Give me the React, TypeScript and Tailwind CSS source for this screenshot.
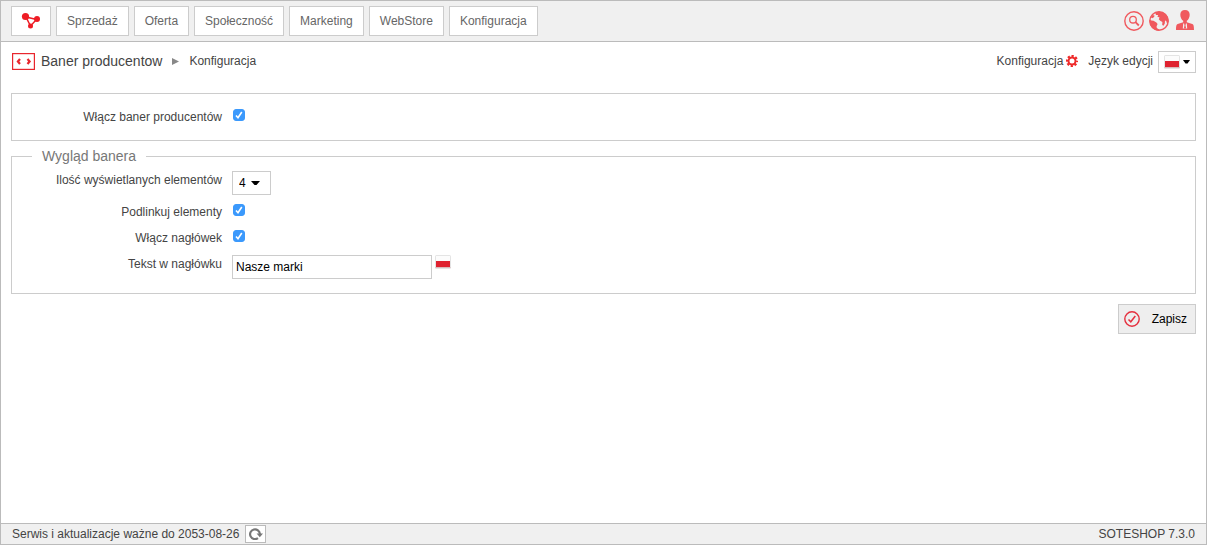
import { useState } from "react";
import type { ReactNode } from "react";

const navItems = [
  "Sprzedaż",
  "Oferta",
  "Społeczność",
  "Marketing",
  "WebStore",
  "Konfiguracja",
];

const LogoIcon = () => (
  <svg width="20" height="18" viewBox="0 0 20 18" fill="#ee1c25">
    <path d="M5 5 15.500 7.500 9.500 14Z" fill="none" stroke="#ee1c25" strokeWidth="1.500" />
    <circle cx="4.500" cy="4.500" r="3.600" />
    <circle cx="16" cy="7" r="3" />
    <circle cx="9.500" cy="14" r="2.500" />
  </svg>
);

const SearchIcon = () => (
  <svg width="20" height="20" viewBox="0 0 20 20" fill="none" stroke="#f0595e">
    <circle cx="10" cy="10" r="9.200" strokeWidth="1.400" />
    <circle cx="9" cy="8.700" r="3.300" strokeWidth="1.300" />
    <path d="M11.500 11.200 14.800 14.500" strokeWidth="1.800" />
  </svg>
);

const GlobeIcon = () => (
  <svg width="20" height="20" viewBox="0 0 20 20">
    <circle cx="10" cy="10" r="9.200" fill="#f0f0f0" stroke="#f0595e" strokeWidth="1.400" />
    <g fill="#f0595e">
      <path d="M6 1.600C9 0.200 13.500 0.300 16.500 3 18.500 5 19.800 7.500 19.600 11L18 12.500 17.200 10 16 9.500 15.800 12.500 14.600 14.800 13.200 14 13.400 11 11.200 9.800 9.800 8.200 10.600 6.500 8.400 5.800 9.200 4 7 4Z" />
      <path d="M0.500 8.800 2.500 9.600 4.500 9.800 7.400 11.600 8.600 13 7.600 15.200 7.800 17 10.500 18.800 9.500 19.700C4 19.500 0.300 15 0.500 8.800Z" />
      <path d="M3.200 4.300 5.400 4.200 5.200 6 3.200 7.200 2 6.500Z" />
    </g>
  </svg>
);

const UserIcon = () => (
  <svg width="18" height="20" viewBox="0 0 18 20" fill="#f0595e">
    <path d="M9 0C12 0 13.700 1.900 13.700 4.700 13.700 7.400 12.200 10 10.800 10.800L10.800 12.300 16.300 14C17.500 14.500 18 15.800 18 20H0C0 15.800.5 14.500 1.700 14L7.200 12.300V10.800C5.800 10 4.300 7.400 4.300 4.700 4.300 1.900 6 0 9 0Z" />
    <path d="M7.200 13.300 9 14.300 10.800 13.300 11.200 18.500H6.800Z" fill="#f0f0f0" />
    <path d="M8.200 14H9.800L9.500 15.200 10.100 18.500H7.900L8.500 15.200Z" />
  </svg>
);

const CodeIcon = () => (
  <svg width="23" height="17" viewBox="0 0 23 17" fill="none" stroke="#e8262d">
    <rect x="0.600" y="0.600" width="21.800" height="15.800" strokeWidth="1.200" />
    <path d="M8 6 5.900 8.500 8 11M15.500 6 17.600 8.500 15.500 11" strokeWidth="2.200" />
  </svg>
);

const GearIcon = () => (
  <svg width="12" height="12" viewBox="0 0 12 12" fill="none" stroke="#ee2a2a">
    <circle cx="6" cy="6" r="3.500" strokeWidth="2" />
    <circle cx="6" cy="6" r="5" strokeWidth="2.200" strokeDasharray="2.200 1.727" strokeDashoffset="1.100" />
  </svg>
);

const Flag = () => (
  <svg width="16" height="14" viewBox="0 0 16 14">
    <rect x="0" y="0" width="16" height="14" rx="1.500" fill="#e4e4e4" />
    <rect x="1" y="1" width="14" height="5" fill="#fcfcfc" />
    <rect x="1" y="6" width="14" height="6" fill="#df2230" />
    <rect x="0.500" y="12" width="15" height="1" fill="#d9b9bb" />
  </svg>
);

const Caret = () => (
  <svg width="9" height="4" viewBox="0 0 9 4" className="pointer-events-none">
    <path d="M0 0H9L5.500 4H3.500Z" fill="#000" />
  </svg>
);

const SaveIcon = () => (
  <svg width="16" height="16" viewBox="0 0 16 16" fill="none" stroke="#e5303f">
    <circle cx="8" cy="8" r="7.200" strokeWidth="1.400" />
    <path d="M4.500 8.500 6.800 10.800 11.300 5" strokeWidth="1.500" />
  </svg>
);

const RefreshIcon = () => (
  <svg width="14" height="12" viewBox="0 0 14 12">
    <path d="M9 10.100A4.900 4.900 0 1 1 10.900 6" fill="none" stroke="#777" strokeWidth="2.200" />
    <path d="M7.600 5.500H14L10.800 9.200Z" fill="#777" />
  </svg>
);

const Checkbox = ({ id }: { id: string }) => {
  const [checked, setChecked] = useState(true);
  return (
    <span className="mt-px ml-px grid size-3">
      <input
        id={id}
        type="checkbox"
        checked={checked}
        onChange={(e) => setChecked(e.target.checked)}
        className="col-start-1 row-start-1 size-3 appearance-none rounded-[3px] border border-[#bbb] checked:border-[#3b99fc] checked:bg-[#3b99fc]"
      />
      {checked && (
        <svg viewBox="0 0 12 12" className="pointer-events-none col-start-1 row-start-1 size-3">
          <path d="M3 6.500 5 8.800 8.800 3" fill="none" stroke="#fff" strokeWidth="1.600" />
        </svg>
      )}
    </span>
  );
};

const Field = ({
  id,
  label,
  children,
}: {
  id: string;
  label: string;
  children: ReactNode;
}) => (
  <div className="flex items-start gap-2.5">
    <label htmlFor={id} className="w-[210px] shrink-0 text-right leading-[18px]">
      {label}
    </label>
    {children}
  </div>
);

const App = () => {
  const [count, setCount] = useState("4");
  const [heading, setHeading] = useState("Nasze marki");

  return (
    <div className="flex min-h-screen flex-col border border-[#bbb] bg-white font-['Liberation_Sans',Arial,sans-serif] text-xs text-[#444]">
      <header className="flex items-center justify-between border-b border-[#bbb] bg-[#f0f0f0] px-2.5 py-[5px]">
        <nav className="flex gap-[5px]">
          <a
            href="#"
            aria-label="Start"
            className="flex h-[30px] w-10 items-center justify-center border border-[#ccc] bg-white"
          >
            <LogoIcon />
          </a>
          {navItems.map((item) => (
            <a
              key={item}
              href="#"
              className="flex h-[30px] items-center border border-[#ccc] bg-white px-2.5 text-[#666]"
            >
              {item}
            </a>
          ))}
        </nav>
        <div className="flex items-center gap-[5px]">
          <button type="button" aria-label="Szukaj">
            <SearchIcon />
          </button>
          <button type="button" aria-label="Strona sklepu">
            <GlobeIcon />
          </button>
          <button type="button" aria-label="Konto" className="mx-0.5 pb-0.5">
            <UserIcon />
          </button>
        </div>
      </header>

      <main className="flex-1 px-2.5 pt-[9px]">
        <div className="flex h-[22px] items-center justify-between">
          <div className="flex items-center pb-0.5">
            <span className="ml-px">
              <CodeIcon />
            </span>
            <h1 className="ml-1.5 text-sm">Baner producentow</h1>
            <svg width="7" height="7" viewBox="0 0 7 7" className="mx-2.5">
              <path d="M0 0 7 3.500 0 7Z" fill="#888" />
            </svg>
            <span>Konfiguracja</span>
          </div>
          <div className="flex items-center">
            <div className="flex items-center pb-0.5">
              <a href="#" className="flex items-center gap-[3px]">
                Konfiguracja
                <GearIcon />
              </a>
              <label htmlFor="lang" className="mr-[5px] ml-2.5">
                Język edycji
              </label>
            </div>
            <div className="grid h-[22px] w-[38px] border border-[#ccc] bg-white">
              <select id="lang" className="col-start-1 row-start-1 appearance-none">
                <option value="pl" aria-label="Polski" />
              </select>
              <span className="pointer-events-none col-start-1 row-start-1 flex items-center justify-between px-[5px]">
                <Flag />
                <svg width="7" height="4" viewBox="0 0 7 4">
                  <path d="M0 0H7L4.500 3.500H2.500Z" fill="#000" />
                </svg>
              </span>
            </div>
          </div>
        </div>

        <form onSubmit={(e) => e.preventDefault()} className="mt-5">
          <div className="border border-[#ccc] py-3.5">
            <Field id="enabled" label="Włącz baner producentów">
              <Checkbox id="enabled" />
            </Field>
          </div>

          <fieldset className="mt-[5px] border border-[#ccc] pt-[5px] pb-3.5">
            <legend className="ml-5 px-2.5 text-sm leading-5 text-[#777]">
              Wygląd banera
            </legend>
            <div className="flex flex-col gap-2">
              <Field id="count" label="Ilość wyświetlanych elementów">
                <div className="grid h-6 w-[39px] items-center border border-[#ccc] bg-white">
                  <select
                    id="count"
                    value={count}
                    onChange={(e) => setCount(e.target.value)}
                    className="col-start-1 row-start-1 h-full appearance-none pl-1.5 text-black"
                  >
                    {["1", "2", "3", "4", "5", "6"].map((n) => (
                      <option key={n}>{n}</option>
                    ))}
                  </select>
                  <span className="pointer-events-none col-start-1 row-start-1 justify-self-end pr-2.5">
                    <Caret />
                  </span>
                </div>
              </Field>
              <Field id="linked" label="Podlinkuj elementy">
                <Checkbox id="linked" />
              </Field>
              <Field id="header" label="Włącz nagłówek">
                <Checkbox id="header" />
              </Field>
              <Field id="heading" label="Tekst w nagłówku">
                <div className="flex gap-[3px]">
                  <input
                    id="heading"
                    type="text"
                    value={heading}
                    onChange={(e) => setHeading(e.target.value)}
                    className="h-6 w-[200px] border border-[#ccc] px-[3px] text-black"
                  />
                  <Flag />
                </div>
              </Field>
            </div>
          </fieldset>

          <div className="mt-2.5 flex justify-end">
            <button
              type="submit"
              className="flex h-[30px] items-center gap-3 border border-[#ccc] bg-[#eee] pr-2 pl-[5px] text-black"
            >
              <SaveIcon />
              Zapisz
            </button>
          </div>
        </form>
      </main>

      <footer className="flex h-[21px] items-center justify-between border-t border-[#bbb] bg-[#f0f0f0] px-[11px]">
        <div className="flex items-center gap-1.5">
          <span>Serwis i aktualizacje ważne do 2053-08-26</span>
          <button
            type="button"
            aria-label="Odśwież"
            className="flex h-[18px] w-[21px] items-center justify-center border border-[#bbb] bg-white"
          >
            <RefreshIcon />
          </button>
        </div>
        <span>SOTESHOP 7.3.0</span>
      </footer>
    </div>
  );
};

export default App;
